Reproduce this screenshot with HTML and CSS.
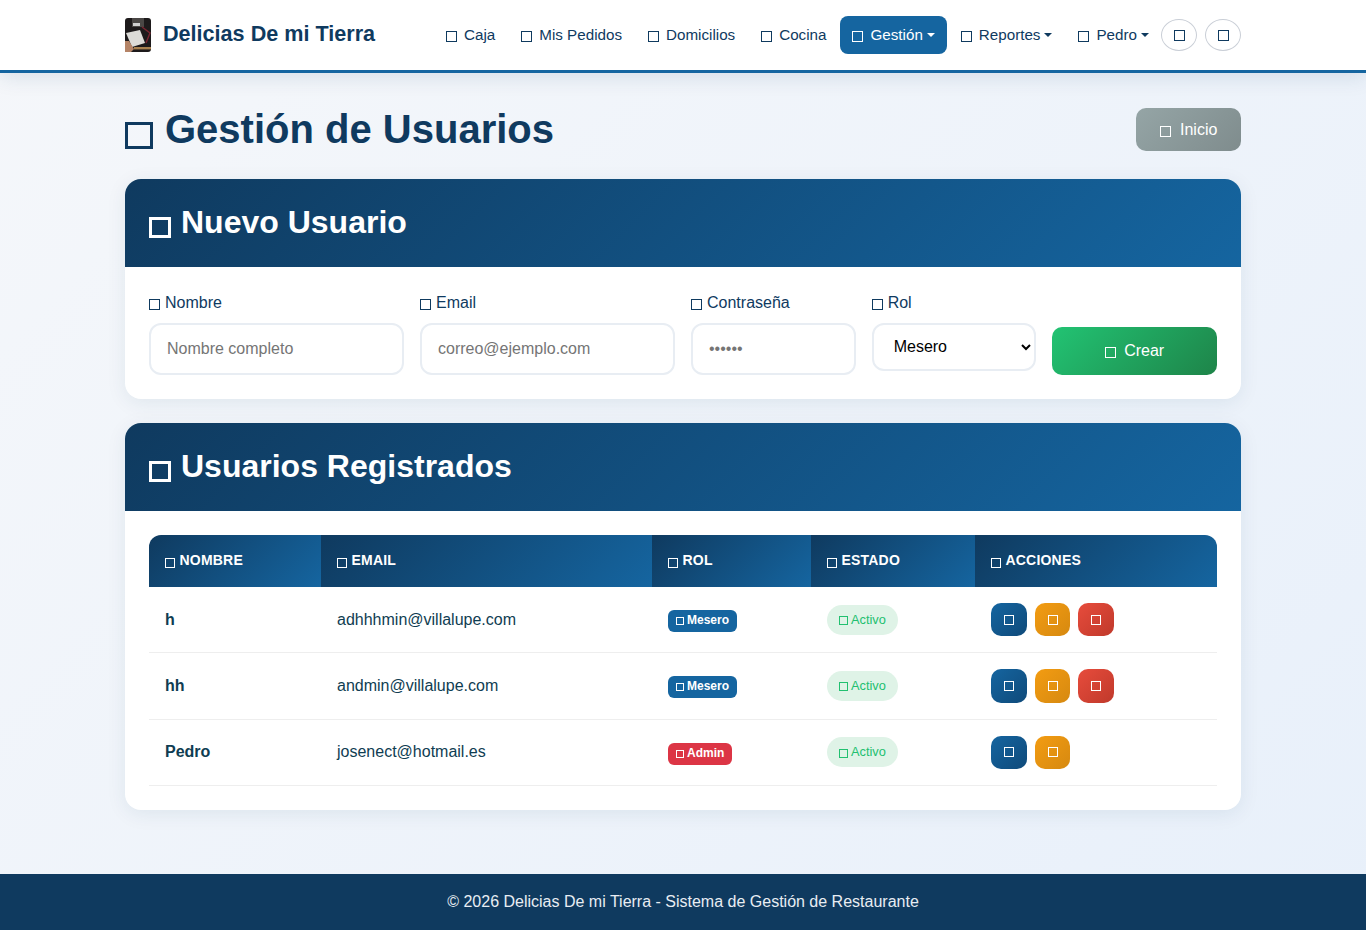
FILE: index.html
```html
<!DOCTYPE html>
<html lang="es">
<head>
<meta charset="utf-8">
<title>Gestión de Usuarios</title>
<link rel="stylesheet" href="styles.css">
</head>
<body>
<header class="navbar">
  <div class="wrap nav-inner">
    <a class="brand" href="#">
      <svg class="logo" viewBox="0 0 26 34" aria-hidden="true">
        <rect width="26" height="34" rx="3" fill="#1d1a1b"/>
        <rect x="7" y="0" width="12" height="9" fill="#4a4745"/>
        <rect x="8" y="5" width="7" height="3" fill="#cfcfcf"/>
        <path d="M1 15 L15 12 L20 25 L7 29 Z" fill="#dcdbd7"/>
        <path d="M17 9 L25 15 L21 25" fill="none" stroke="#7a2430" stroke-width="1.4"/>
        <rect x="9" y="29" width="17" height="2.4" fill="#a8814f"/>
        <path d="M0 23 L4 23 L9 31 L6 34 L0 34 Z" fill="#b58467"/>
      </svg>
      <span>Delicias De mi Tierra</span>
    </a>
    <nav class="nav">
      <div class="links">
        <a class="nav-link" href="#"><i class="tofu"></i>Caja</a>
        <a class="nav-link" href="#"><i class="tofu"></i>Mis Pedidos</a>
        <a class="nav-link" href="#"><i class="tofu"></i>Domicilios</a>
        <a class="nav-link" href="#"><i class="tofu"></i>Cocina</a>
        <a class="nav-link active caret" href="#"><i class="tofu"></i>Gestión</a>
        <a class="nav-link caret" href="#"><i class="tofu"></i>Reportes</a>
        <a class="nav-link caret" href="#"><i class="tofu"></i>Pedro</a>
      </div>
      <div class="tools">
        <button class="round"><i class="tofu"></i></button>
        <button class="round"><i class="tofu"></i></button>
      </div>
    </nav>
  </div>
</header>

<main class="wrap page">
  <div class="title-row">
    <h1><i class="tofu"></i>Gestión de Usuarios</h1>
    <a class="btn-home" href="#"><i class="tofu"></i>Inicio</a>
  </div>

  <section class="card">
    <div class="card-head"><h2><i class="tofu"></i>Nuevo Usuario</h2></div>
    <form class="card-body form-grid">
      <div class="field span3">
        <label><i class="tofu"></i>Nombre</label>
        <input class="control" type="text" placeholder="Nombre completo">
      </div>
      <div class="field span3">
        <label><i class="tofu"></i>Email</label>
        <input class="control" type="email" placeholder="correo@ejemplo.com">
      </div>
      <div class="field span2">
        <label><i class="tofu"></i>Contraseña</label>
        <input class="control" type="password" placeholder="••••••">
      </div>
      <div class="field span2">
        <label><i class="tofu"></i>Rol</label>
        <select class="control select"><option>Mesero</option><option>Admin</option></select>
      </div>
      <div class="span2 submit-cell">
        <button class="btn-create" type="button"><i class="tofu"></i>Crear</button>
      </div>
    </form>
  </section>

  <section class="card">
    <div class="card-head"><h2><i class="tofu"></i>Usuarios Registrados</h2></div>
    <div class="card-body">
      <table class="users">
        <colgroup><col class="c1"><col class="c2"><col class="c3"><col class="c4"><col class="c5"></colgroup>
        <thead>
          <tr>
            <th><i class="tofu"></i>NOMBRE</th>
            <th><i class="tofu"></i>EMAIL</th>
            <th><i class="tofu"></i>ROL</th>
            <th><i class="tofu"></i>ESTADO</th>
            <th><i class="tofu"></i>ACCIONES</th>
          </tr>
        </thead>
        <tbody>
          <tr>
            <td class="name">h</td>
            <td>adhhhmin@villalupe.com</td>
            <td><span class="badge mesero"><i class="tofu"></i>Mesero</span></td>
            <td><span class="status"><i class="tofu"></i>Activo</span></td>
            <td><div class="actions"><button class="act blue"><i class="tofu"></i></button><button class="act orange"><i class="tofu"></i></button><button class="act red"><i class="tofu"></i></button></div></td>
          </tr>
          <tr>
            <td class="name">hh</td>
            <td>andmin@villalupe.com</td>
            <td><span class="badge mesero"><i class="tofu"></i>Mesero</span></td>
            <td><span class="status"><i class="tofu"></i>Activo</span></td>
            <td><div class="actions"><button class="act blue"><i class="tofu"></i></button><button class="act orange"><i class="tofu"></i></button><button class="act red"><i class="tofu"></i></button></div></td>
          </tr>
          <tr>
            <td class="name">Pedro</td>
            <td>josenect@hotmail.es</td>
            <td><span class="badge admin"><i class="tofu"></i>Admin</span></td>
            <td><span class="status"><i class="tofu"></i>Activo</span></td>
            <td><div class="actions"><button class="act blue"><i class="tofu"></i></button><button class="act orange"><i class="tofu"></i></button></div></td>
          </tr>
        </tbody>
      </table>
    </div>
  </section>
</main>

<footer class="footer">© 2026 Delicias De mi Tierra - Sistema de Gestión de Restaurante</footer>
</body>
</html>
```
FILE: styles.css
```css
* { box-sizing: border-box; }
html, body { margin: 0; padding: 0; }
body {
  min-height: 930px;
  font-family: "Liberation Sans", Arial, sans-serif;
  font-size: 16px;
  line-height: 1.5;
  color: #0f3a5f;
  background: linear-gradient(135deg, #f5f7fa 0%, #e8f0fa 100%);
}
a { text-decoration: none; color: inherit; }
.wrap { width: 1116px; margin: 0 auto; }

.tofu {
  display: inline-block;
  width: 0.72em;
  height: 0.72em;
  border: 0.1em solid currentColor;
  vertical-align: -0.1em;
  font-style: normal;
}

.navbar {
  height: 73px;
  background: #fff;
  border-bottom: 3px solid #1565a0;
  box-shadow: 0 4px 20px rgba(15, 58, 95, 0.12);
}
.nav-inner { display: flex; align-items: center; justify-content: space-between; height: 70px; }
.brand { display: flex; align-items: center; gap: 12px; font-size: 21.6px; line-height: 32px; font-weight: 700; color: #0f3a5f; margin-top: -2px; }
.logo { width: 26px; height: 34px; display: block; margin-top: 1px; }
.nav { display: flex; align-items: center; }
.links { display: flex; align-items: center; gap: 2px; }
.tools { display: flex; align-items: center; gap: 8px; }
.nav-link {
  display: block;
  padding: 7px 12px;
  border-radius: 8px;
  font-size: 15.2px;
  line-height: 24px;
  color: #0f3a5f;
  white-space: nowrap;
}
.nav-link .tofu { width: 11px; height: 11px; border-width: 1.6px; margin-right: 7px; vertical-align: -2px; }
.nav-link.active { background: #1565a0; color: #fff; }
.caret::after {
  content: "";
  display: inline-block;
  margin-left: 4px;
  vertical-align: 3px;
  border-top: 4px solid currentColor;
  border-left: 4px solid transparent;
  border-right: 4px solid transparent;
}
.round {
  width: 36px;
  height: 32px;
  padding: 0;
  display: flex;
  align-items: center;
  justify-content: center;
  background: transparent;
  border: 1px solid #c9ced6;
  border-radius: 50%;
  color: #0f3a5f;
  font-size: 14px;
}
.round .tofu { width: 11px; height: 11px; border-width: 1.6px; vertical-align: 0; }

.page { padding-top: 35px; padding-bottom: 64px; }
.title-row { display: flex; align-items: center; justify-content: space-between; height: 43px; margin-bottom: 28px; }
h1 { margin: -2px 0 0; font-size: 40px; line-height: 48px; font-weight: 700; color: #0f3a5f; }
h1 .tofu { width: 28px; height: 27px; border-width: 3.5px; margin-right: 12px; vertical-align: -6px; }
.btn-home {
  display: block;
  width: 105px;
  height: 43px;
  padding: 10px 24px;
  border-radius: 10px;
  color: #fff;
  white-space: nowrap;
  background: linear-gradient(135deg, #95a5a6, #7f8c8d);
}
.btn-home .tofu { width: 11px; height: 11px; border-width: 1.5px; margin-right: 9px; vertical-align: -2px; }

.card {
  background: #fff;
  border-radius: 16px;
  box-shadow: 0 4px 20px rgba(15, 58, 95, 0.08);
  margin-bottom: 24px;
  overflow: hidden;
}
.card:last-child { margin-bottom: 0; }
.card-head {
  height: 88px;
  display: flex;
  align-items: center;
  padding: 0 24px 2px;
  background: linear-gradient(135deg, #0f3a5f, #1565a0);
  color: #fff;
}
h2 { margin: 0; font-size: 32px; line-height: 38px; font-weight: 700; }
h2 .tofu { width: 22px; height: 21px; border-width: 3px; margin-right: 10px; vertical-align: -5px; }
.card-body { padding: 24px; }

.form-grid { display: grid; grid-template-columns: repeat(12, 1fr); column-gap: 16px; }
.span3 { grid-column: span 3; }
.span2 { grid-column: span 2; }
.field label { display: block; height: 24px; margin-bottom: 8px; color: #0f3a5f; }
.field label .tofu { width: 11px; height: 11px; border-width: 1.7px; margin-right: 5px; vertical-align: -2px; }
.control {
  display: block;
  width: 100%;
  height: 52px;
  padding: 12px 16px;
  border: 2px solid #e8edf3;
  border-radius: 12px;
  background: #fff;
  font: 16px "Liberation Sans", Arial, sans-serif;
  color: #000;
  outline: none;
}
.control::placeholder { color: #757575; opacity: 1; }
.select { height: 48px; padding: 6px 4px 8px 16px; }
.submit-cell { display: flex; align-items: flex-end; }
.btn-create {
  width: 100%;
  height: 48px;
  border: 0;
  border-radius: 10px;
  font: 16px "Liberation Sans", Arial, sans-serif;
  color: #fff;
  background: linear-gradient(135deg, #22c373, #1e8449);
}
.btn-create .tofu { width: 11px; height: 11px; border-width: 1.5px; margin-right: 8px; vertical-align: -2px; }

.users { width: 1068px; table-layout: fixed; border-collapse: separate; border-spacing: 0; }
.c1 { width: 172px; } .c2 { width: 331px; } .c3 { width: 159px; } .c4 { width: 164px; } .c5 { width: 242px; }
.users th {
  height: 52px;
  padding: 0 16px 2px;
  text-align: left;
  font-size: 14px;
  font-weight: 700;
  letter-spacing: 0.2px;
  color: #fff;
  background: linear-gradient(135deg, #0f3a5f, #1565a0);
}
.users th:first-child { border-top-left-radius: 12px; }
.users th:last-child { border-top-right-radius: 12px; }
.users th .tofu { width: 10px; height: 10px; border-width: 1.5px; margin-right: 4.5px; vertical-align: -3px; }
.users td {
  height: 66.33px;
  padding: 0 16px;
  border-bottom: 1px solid #eeeeee;
  color: #0f3d52;
  vertical-align: middle;
}
.users td.name { font-weight: 700; }
.badge {
  display: inline-block;
  padding: 0 8px;
  height: 22px;
  line-height: 20px;
  border-radius: 6px;
  font-size: 12px;
  font-weight: 700;
  color: #fff;
}
.badge .tofu { width: 8px; height: 8px; border-width: 1.2px; margin-right: 3px; vertical-align: -1px; }
.mesero { background: #1565a0; }
.admin { background: #dc3545; }
.status {
  display: inline-block;
  height: 30px;
  line-height: 29px;
  width: 71px;
  padding: 0 12px;
  border-radius: 15px;
  font-size: 12.8px;
  color: #22c070;
  background: #dff3e7;
}
.status .tofu { width: 9px; height: 9px; border-width: 1.2px; margin-right: 3px; vertical-align: -1.5px; }
.actions { display: flex; gap: 8px; }
.act {
  width: 36px;
  height: 33.5px;
  padding: 0;
  border: 0;
  border-radius: 10px;
  display: flex;
  align-items: center;
  justify-content: center;
  color: #fff;
}
.act .tofu { width: 10px; height: 10px; border-width: 1.5px; }
.act.orange { width: 35px; }
.blue { background: linear-gradient(135deg, #1565a0, #0f4a7a); }
.orange { background: linear-gradient(135deg, #f39c12, #d68910); }
.red { background: linear-gradient(135deg, #e74c3c, #c0392b); }

.footer {
  height: 56px;
  line-height: 56px;
  text-align: center;
  color: #e8edf3;
  background: #0f3a5f;
}
```
